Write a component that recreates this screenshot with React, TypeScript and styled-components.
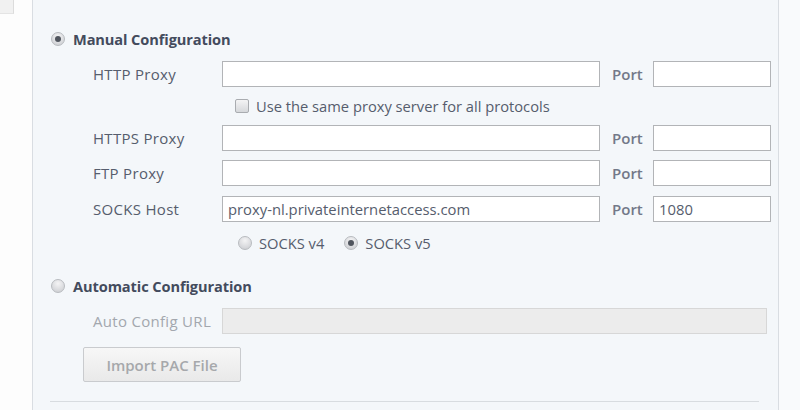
import React from "react";
import styled, { createGlobalStyle } from "styled-components";

const Global = createGlobalStyle`
  html, body { margin: 0; padding: 0; background: #ffffff; }
  body { font-family: "Open Sans", "Noto Sans", "DejaVu Sans", sans-serif; }
`;

const Page = styled.div`
  display: flex;
  width: 800px;
  height: 410px;
  overflow: hidden;
  background: #ffffff;
`;

const LeftStrip = styled.div`
  width: 32px;
  flex: none;
  background: #fdfdfd;
`;

const TabStub = styled.div`
  width: 13px;
  height: 13px;
  background: #f1f1f1;
  border-right: 1px solid #dcdcdc;
  border-bottom: 1px solid #e4e4e4;
`;

const Panel = styled.div`
  width: 747px;
  flex: none;
  background: #f4f7fa;
  border-left: 1px solid #d9dde2;
  border-right: 1px solid #d9dde2;
  padding: 29px 0 0 0;
  box-sizing: border-box;
  display: flex;
  flex-direction: column;
`;

const RightStrip = styled.div`
  flex: 1;
  background: #f9fafc;
`;

const Heading = styled.label<{ $top?: number }>`
  display: flex;
  align-items: center;
  gap: 8px;
  height: 20px;
  margin: ${(p) => p.$top ?? 0}px 0 0 18px;
  font-size: 14.6px;
  font-weight: 700;
  color: #434b5d;
  letter-spacing: -0.1px;
  white-space: nowrap;
`;

const Row = styled.div<{ $top: number }>`
  display: grid;
  grid-template-columns: 129px 378px 53px 118px;
  align-items: center;
  height: 26px;
  margin: ${(p) => p.$top}px 0 0 60px;
`;

const Label = styled.span<{ $disabled?: boolean }>`
  font-size: 15px;
  letter-spacing: 0.3px;
  color: ${(p) => (p.$disabled ? "#a3a7ae" : "#565d6d")};
  white-space: nowrap;
`;

const PortLabel = styled(Label)`
  padding-left: 12px;
  font-weight: 600;
  letter-spacing: 0;
  color: #737989;
`;

const Input = styled.input<{ $disabled?: boolean }>`
  box-sizing: border-box;
  height: 26px;
  width: 100%;
  margin: 0;
  padding: 0 5px;
  border: 1px solid #b2b4b7;
  background: ${(p) => (p.$disabled ? "#ececec" : "#ffffff")};
  border-color: ${(p) => (p.$disabled ? "#d7d7d7" : "#b2b4b7")};
  font-family: inherit;
  font-size: 14.8px;
  color: #565d6d;
  outline: none;
`;

const WideInput = styled(Input)`
  grid-column: 2 / 5;
  width: 545px;
`;

const OptionRow = styled.div<{ $top: number; $left: number }>`
  display: flex;
  align-items: center;
  gap: 20px;
  height: 20px;
  margin: ${(p) => p.$top}px 0 0 ${(p) => p.$left}px;
`;

const Option = styled.label`
  display: flex;
  align-items: center;
  gap: 7px;
  font-size: 14.7px;
  color: #565d6d;
  white-space: nowrap;
`;

const RadioDot = styled.span<{ $checked?: boolean }>`
  width: 12px;
  height: 12px;
  flex: none;
  border-radius: 50%;
  border: 1px solid #b8bbbf;
  background: radial-gradient(circle at 50% 30%, #f4f4f5 0%, #dcdde0 55%, #c8cace 100%);
  display: flex;
  align-items: center;
  justify-content: center;
  &::after {
    content: "";
    display: ${(p) => (p.$checked ? "block" : "none")};
    width: 6px;
    height: 6px;
    border-radius: 50%;
    background: #50555e;
  }
`;

const CheckBox = styled.span`
  width: 12px;
  height: 12px;
  flex: none;
  border-radius: 2px;
  border: 1px solid #a9acb0;
  background: linear-gradient(#f4f4f5, #d6d8db);
`;

const Button = styled.button<{ $top: number }>`
  width: 158px;
  height: 35px;
  margin: ${(p) => p.$top}px 0 0 50px;
  box-sizing: border-box;
  border: 1px solid #c9cbce;
  border-radius: 2px;
  background: linear-gradient(#f7f7f7, #e9e9e9);
  font-family: inherit;
  font-size: 15px;
  font-weight: 600;
  color: #a6a8ab;
  padding: 0;
`;

const Separator = styled.div<{ $top: number }>`
  height: 1px;
  margin: ${(p) => p.$top}px 19px 0 17px;
  background: #d8dce0;
`;

type FieldProps = { label: string; top: number; value?: string; port?: string };

const Field = ({ label, top, value = "", port = "" }: FieldProps) => (
  <Row $top={top}>
    <Label>{label}</Label>
    <Input readOnly value={value} />
    <PortLabel>Port</PortLabel>
    <Input readOnly value={port} />
  </Row>
);

export default function App() {
  return (
    <>
      <Global />
      <Page>
        <LeftStrip>
          <TabStub />
        </LeftStrip>
        <Panel>
          <Heading>
            <RadioDot $checked />
            Manual Configuration
          </Heading>
          <Field label="HTTP Proxy" top={12} />
          <OptionRow $top={9} $left={202}>
            <Option>
              <CheckBox />
              Use the same proxy server for all protocols
            </Option>
          </OptionRow>
          <Field label="HTTPS Proxy" top={9} />
          <Field label="FTP Proxy" top={9} />
          <Field label="SOCKS Host" top={10} value="proxy-nl.privateinternetaccess.com" port="1080" />
          <OptionRow $top={11} $left={205}>
            <Option>
              <RadioDot />
              SOCKS v4
            </Option>
            <Option>
              <RadioDot $checked />
              SOCKS v5
            </Option>
          </OptionRow>
          <Heading $top={23}>
            <RadioDot />
            Automatic Configuration
          </Heading>
          <Row $top={12}>
            <Label $disabled>Auto Config URL</Label>
            <WideInput $disabled readOnly value="" />
          </Row>
          <Button $top={13}>Import PAC File</Button>
          <Separator $top={19} />
        </Panel>
        <RightStrip />
      </Page>
    </>
  );
}
